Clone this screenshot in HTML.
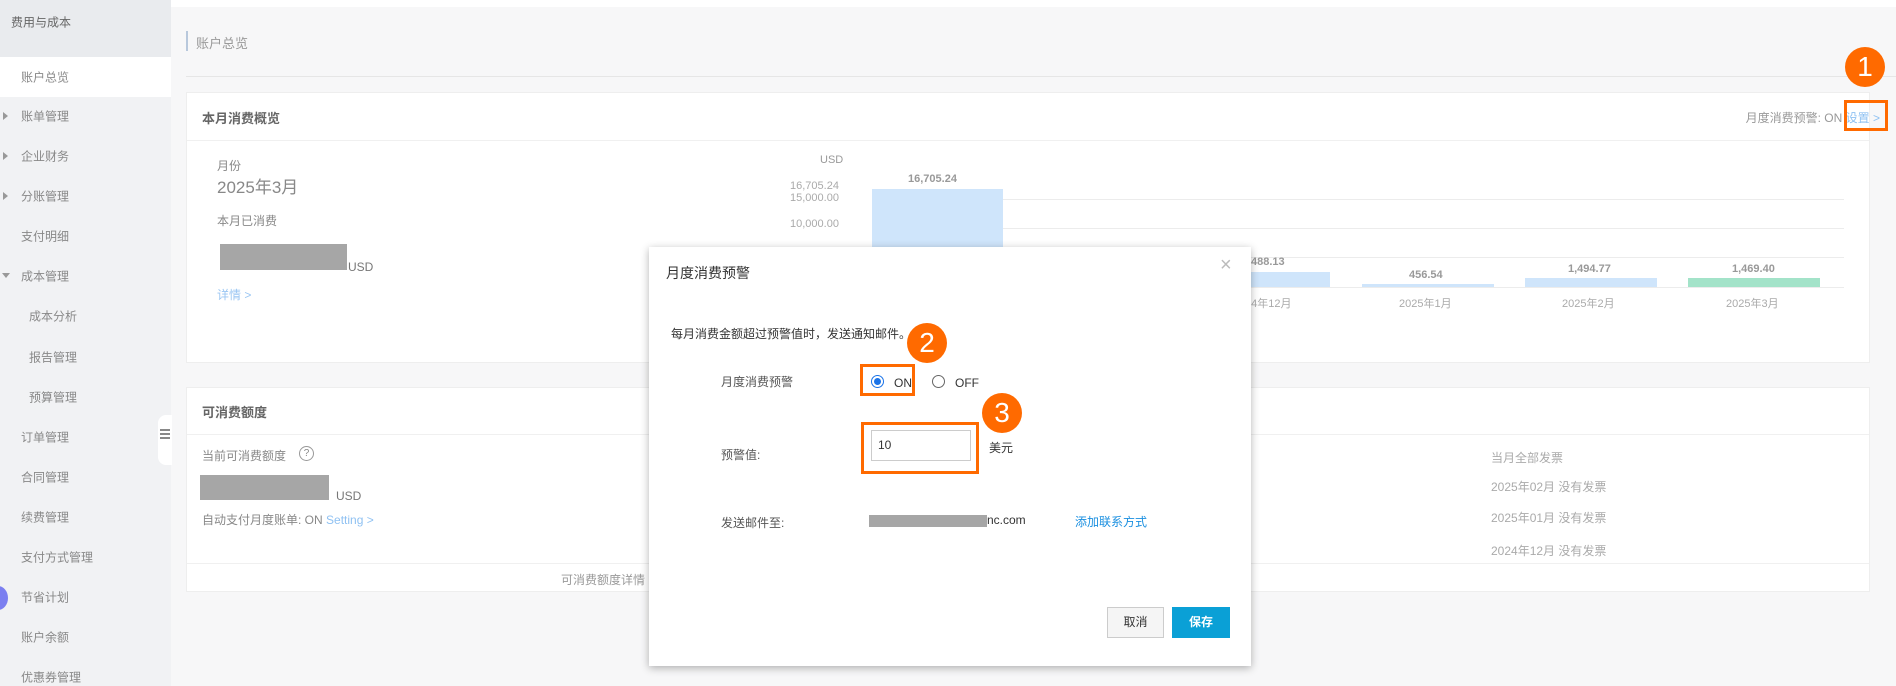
<!DOCTYPE html>
<html><head><meta charset="utf-8"><style>
*{margin:0;padding:0;box-sizing:border-box}
body{width:1896px;height:686px;overflow:hidden;position:relative;background:#f7f7f8;font-family:"Liberation Sans","Noto Sans CJK SC",sans-serif;font-size:12px;color:#777}
.a{position:absolute;white-space:nowrap}
.side{position:absolute;left:0;top:0;width:171px;height:686px;background:#f1f2f4}
.sh{position:absolute;left:0;top:0;width:171px;height:57px;background:#e9ebee}
.act{position:absolute;left:0;top:57px;width:171px;height:40px;background:#fff}
.it{position:absolute;left:21px;font-size:12px;color:#888;transform:translateY(-50%)}
.sub{left:29px}
.tri{position:absolute;left:3px;width:0;height:0;border-top:4px solid transparent;border-bottom:4px solid transparent;border-left:5px solid #999}
.card{position:absolute;left:186px;right:26px;background:#fff;border:1px solid #eee}
.bar{position:absolute;background:#cfe5fb}
.grid{position:absolute;left:1003px;width:841px;height:1px;background:#ececec}
.orange{position:absolute;border:3px solid #ff6a00}
.circ{position:absolute;width:40px;height:40px;border-radius:50%;background:#ff6a00;color:#fff;font-size:28px;text-align:center;line-height:40px}
.gray{position:absolute;background:#a6a6a6}
</style></head><body>
<div style="position:absolute;left:171px;top:0;right:0;height:7px;background:#fff"></div>
<div class="side">
<div class="sh"></div><div class="act"></div>
<div class="it" style="left:11px;top:22px;color:#666;font-size:12px">费用与成本</div>
<div class="it" style="top:77px">账户总览</div>
<div class="tri" style="top:112px"></div><div class="it" style="top:116px">账单管理</div>
<div class="tri" style="top:152px"></div><div class="it" style="top:156px">企业财务</div>
<div class="tri" style="top:192px"></div><div class="it" style="top:196px">分账管理</div>
<div class="it" style="top:236px">支付明细</div>
<div style="position:absolute;left:2px;top:273px;border-left:4px solid transparent;border-right:4px solid transparent;border-top:5px solid #999"></div><div class="it" style="top:276px">成本管理</div>
<div class="it sub" style="top:316px">成本分析</div>
<div class="it sub" style="top:357px">报告管理</div>
<div class="it sub" style="top:397px">预算管理</div>
<div class="it" style="top:437px">订单管理</div>
<div class="it" style="top:477px">合同管理</div>
<div class="it" style="top:517px">续费管理</div>
<div class="it" style="top:557px">支付方式管理</div>
<div class="it" style="top:597px">节省计划</div>
<div class="it" style="top:637px">账户余额</div>
<div class="it" style="top:677px">优惠券管理</div>
</div>
<div style="position:absolute;left:-12px;top:586px;width:20px;height:24px;border-radius:50%;background:#7b7ff0"></div>
<div style="position:absolute;left:158px;top:415px;width:14px;height:50px;background:#fff;border-radius:8px 0 0 8px"></div>
<div class="a" style="left:160px;top:429px;width:10px;height:2px;background:#888;box-shadow:0 4px 0 #888,0 8px 0 #888"></div>

<div style="position:absolute;left:186px;top:31px;width:2px;height:20px;background:#b8c8dc"></div>
<div class="a" style="left:196px;top:33px;font-size:13px;color:#999">账户总览</div>
<div style="position:absolute;left:186px;right:0;top:76px;height:1px;background:#e6e6e6"></div>

<div class="card" style="top:92px;height:271px">
<div style="position:absolute;left:0;right:0;top:47px;height:1px;background:#f0f0f0"></div>
</div>
<div class="a" style="left:202px;top:108px;font-size:13px;color:#666;font-weight:bold">本月消费概览</div>
<div class="a" style="right:16px;top:109px;color:#999;text-align:right">月度消费预警: ON <span style="color:#8fc1f2">设置 &gt;</span></div>
<div class="orange" style="left:1844px;top:100px;width:44px;height:31px"></div>
<div class="circ" style="left:1845px;top:47px">1</div>
<div class="a" style="left:217px;top:157px;color:#888">月份</div>
<div class="a" style="left:217px;top:173px;font-size:17px;color:#888">2025年3月</div>
<div class="a" style="left:217px;top:212px;color:#888">本月已消费</div>
<div class="gray" style="left:220px;top:244px;width:127px;height:26px"></div>
<div class="a" style="left:348px;top:260px;color:#777">USD</div>
<div class="a" style="left:217px;top:286px;color:#9ac6f3">详情 &gt;</div>

<div class="a" style="left:820px;top:154px;color:#999;font-size:11px">USD</div>
<div class="a" style="left:790px;top:180px;color:#aaa;font-size:11px">16,705.24</div>
<div class="a" style="left:790px;top:192px;color:#aaa;font-size:11px">15,000.00</div>
<div class="a" style="left:790px;top:218px;color:#aaa;font-size:11px">10,000.00</div>
<div class="grid" style="top:199px"></div><div class="grid" style="top:228px"></div><div class="grid" style="top:257px"></div><div class="grid" style="top:287px"></div>
<div class="bar" style="left:872px;top:189px;width:131px;height:98px"></div>
<div class="a" style="left:908px;top:173px;color:#999;font-weight:bold;font-size:11px">16,705.24</div>
<div class="bar" style="left:1240px;top:272px;width:90px;height:15px"></div>
<div class="a" style="left:1251px;top:256px;color:#999;font-size:11px;font-weight:bold">488.13</div>
<div class="bar" style="left:1362px;top:284px;width:132px;height:3px"></div>
<div class="a" style="left:1409px;top:269px;color:#999;font-size:11px;font-weight:bold">456.54</div>
<div class="bar" style="left:1525px;top:278px;width:132px;height:9px"></div>
<div class="a" style="left:1568px;top:263px;color:#999;font-size:11px;font-weight:bold">1,494.77</div>
<div class="bar" style="left:1688px;top:278px;width:132px;height:9px;background:#a3e3c9"></div>
<div class="a" style="left:1732px;top:263px;color:#999;font-size:11px;font-weight:bold">1,469.40</div>
<div class="a" style="left:1245px;top:295px;color:#aaa;font-size:11px">24年12月</div>
<div class="a" style="left:1399px;top:295px;color:#aaa;font-size:11px">2025年1月</div>
<div class="a" style="left:1562px;top:295px;color:#aaa;font-size:11px">2025年2月</div>
<div class="a" style="left:1726px;top:295px;color:#aaa;font-size:11px">2025年3月</div>

<div class="card" style="top:387px;height:205px">
<div style="position:absolute;left:0;right:0;top:46px;height:1px;background:#f0f0f0"></div>
<div style="position:absolute;left:0;right:0;top:175px;height:1px;background:#f0f0f0"></div>
</div>
<div class="a" style="left:202px;top:402px;font-size:13px;color:#666;font-weight:bold">可消费额度</div>
<div class="a" style="left:202px;top:447px;color:#888">当前可消费额度</div>
<div class="a" style="left:299px;top:446px;width:15px;height:15px;border:1px solid #999;border-radius:50%;font-size:10px;text-align:center;line-height:13px;color:#888">?</div>
<div class="gray" style="left:200px;top:475px;width:129px;height:25px"></div>
<div class="a" style="left:336px;top:489px;color:#777">USD</div>
<div class="a" style="left:202px;top:511px;color:#888">自动支付月度账单: ON <span style="color:#8fc1f2">Setting &gt;</span></div>
<div class="a" style="left:561px;top:571px;color:#999">可消费额度详情</div>
<div class="a" style="left:1491px;top:449px;color:#aaa">当月全部发票</div>
<div class="a" style="left:1491px;top:478px;color:#aaa">2025年02月 没有发票</div>
<div class="a" style="left:1491px;top:509px;color:#aaa">2025年01月 没有发票</div>
<div class="a" style="left:1491px;top:542px;color:#aaa">2024年12月 没有发票</div>

<div style="position:absolute;left:649px;top:247px;width:602px;height:419px;background:#fff;box-shadow:0 2px 8px rgba(0,0,0,.3)"></div>
<div class="a" style="left:666px;top:263px;font-size:14px;color:#333">月度消费预警</div>
<div class="a" style="left:1220px;top:254px;font-size:20px;color:#bbb">×</div>
<div class="a" style="left:671px;top:325px;color:#333">每月消费金额超过预警值时，发送通知邮件。</div>
<div class="a" style="left:721px;top:373px;color:#555">月度消费预警</div>
<div class="a" style="left:871px;top:375px;width:13px;height:13px;border:1px solid #1a73e8;border-radius:50%"><div style="margin:2px;width:7px;height:7px;border-radius:50%;background:#1a73e8"></div></div>
<div class="a" style="left:894px;top:376px;color:#333">ON</div>
<div class="a" style="left:932px;top:375px;width:13px;height:13px;border:1px solid #666;border-radius:50%"></div>
<div class="a" style="left:955px;top:376px;color:#333">OFF</div>
<div class="orange" style="left:860px;top:364px;width:55px;height:32px"></div>
<div class="circ" style="left:907px;top:323px">2</div>
<div class="a" style="left:721px;top:446px;color:#555">预警值:</div>
<div class="a" style="left:871px;top:430px;width:100px;height:31px;border:1px solid #ccc"></div>
<div class="a" style="left:878px;top:438px;color:#333">10</div>
<div class="orange" style="left:861px;top:422px;width:118px;height:52px"></div>
<div class="a" style="left:989px;top:439px;color:#333">美元</div>
<div class="circ" style="left:982px;top:393px">3</div>
<div class="a" style="left:721px;top:514px;color:#555">发送邮件至:</div>
<div class="gray" style="left:869px;top:515px;width:118px;height:12px"></div>
<div class="a" style="left:987px;top:513px;color:#333">nc.com</div>
<div class="a" style="left:1075px;top:513px;color:#1a8fe0">添加联系方式</div>
<div class="a" style="left:1107px;top:607px;width:57px;height:31px;border:1px solid #ccc;background:#f5f5f5;text-align:center;line-height:29px;color:#333">取消</div>
<div class="a" style="left:1172px;top:607px;width:58px;height:31px;background:#0aa0d6;text-align:center;line-height:31px;color:#fff;font-weight:bold">保存</div>
</body></html>
